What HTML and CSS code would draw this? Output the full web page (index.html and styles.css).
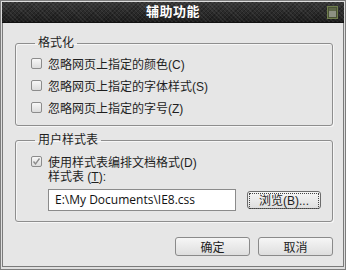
FILE: index.html
```html
<!DOCTYPE html>
<html lang="zh-CN">
<head>
  <meta charset="UTF-8" />
  <title>辅助功能</title>
  <link rel="stylesheet" href="styles.css">
</head>
<body>

<div class="window">
  <div class="titlebar">
    <span class="title">辅助功能</span>
    <svg class="title-icon" width="11" height="13" viewBox="0 0 11 13">
      <rect x="0.5" y="0.5" width="10" height="12" fill="#4a5236" stroke="#6f7d4c"/>
      <rect x="2" y="2" width="7" height="3" fill="#5d6648"/>
      <rect x="2" y="5" width="7" height="6" fill="#8d9182"/>
    </svg>
  </div>

  <div class="content">
    <fieldset class="group">
      <legend>格式化</legend>
      <label class="check-row"><span class="box"></span>忽略网页上指定的颜色(C)</label>
      <label class="check-row"><span class="box"></span>忽略网页上指定的字体样式(S)</label>
      <label class="check-row"><span class="box"></span>忽略网页上指定的字号(Z)</label>
    </fieldset>

    <fieldset class="group user-styles">
      <legend>用户样式表</legend>
      <label class="check-row short"><span class="box checked">
        <svg width="9" height="9" viewBox="0 0 9 9"><path d="M1.5 4.5 L3.5 7 L7.5 1.5" fill="none" stroke="#8a8a8a" stroke-width="1.3"/></svg>
      </span>使用样式表编排文档格式(D)</label>
      <div class="sub">
        <div class="field-label">样式表 (<u>T</u>):</div>
        <div class="field-row">
          <div class="input">E:\My Documents\IE8.css</div>
          <button class="btn browse"><span class="focus">浏览(B)...</span></button>
        </div>
      </div>
    </fieldset>

    <div class="actions">
      <button class="btn">确定</button>
      <button class="btn">取消</button>
    </div>
  </div>
</div>

</body>
</html>
```

FILE: styles.css
```css
body {
  margin: 0;
  background: #ffffff;
  font-family: "Liberation Sans", "Noto Sans CJK SC", sans-serif;
  font-size: 12px;
  color: #1e1e1e;
}

.window {
  width: 346px;
  height: 270px;
  box-sizing: border-box;
  border: 1px solid #7d7d7d;
  padding: 1px 1px 2px 1px;
  background: #dedede;
  display: flex;
  flex-direction: column;
}

.titlebar {
  height: 20px;
  border-bottom: 1px solid #111;
  background-color: #262626;
  background-image:
    repeating-linear-gradient(45deg, rgba(255,255,255,0.06) 0 1px, transparent 1px 3px),
    repeating-linear-gradient(-45deg, rgba(0,0,0,0.25) 0 1px, transparent 1px 3px),
    linear-gradient(#3a3a3a, #1e1e1e);
  display: flex;
  align-items: center;
  justify-content: center;
  position: relative;
}

.title {
  color: #ffffff;
  font-weight: bold;
  font-size: 13px;
  line-height: 16px;
  letter-spacing: 0.5px;
}

.title-icon {
  position: absolute;
  right: 6px;
  top: 4px;
}

.content {
  flex: 1;
  background: #e6e6e6;
  border: 1px solid #7a7a7a;
  border-top: none;
  padding: 13px 10px 0 12px;
}

.group {
  margin: 0;
  padding: 2px 0 7px 15px;
  border: 1px solid #8e8e8e;
  border-radius: 3px;
  box-shadow: inset 1px 1px 0 #f6f6f6, 1px 1px 0 #f6f6f6;
}

.group legend {
  padding: 0 3px;
  margin-left: 4px;
  line-height: 14px;
}

.check-row {
  display: flex;
  align-items: center;
  gap: 6px;
  height: 22px;
}

.check-row.short {
  height: 18px;
  margin-top: 3px;
}

.box {
  width: 9px;
  height: 9px;
  border: 1px solid #8c8c8c;
  border-radius: 2px;
  background: linear-gradient(#f7f7f7, #dcdcdc);
  display: flex;
  align-items: center;
  justify-content: center;
}

.user-styles {
  margin-top: 7px;
  padding-bottom: 10px;
}

.sub {
  padding-left: 17px;
}

.field-label {
  line-height: 14px;
}

.field-label u {
  text-decoration: underline;
}

.field-row {
  display: flex;
  align-items: center;
  gap: 11px;
  margin-top: 5px;
}

.input {
  width: 180px;
  height: 20px;
  border: 1px solid #8b8b8b;
  background: #ffffff;
  padding-left: 6px;
  line-height: 20px;
  font-family: "Open Sans", "Noto Sans CJK SC", sans-serif;
  font-size: 12px;
  color: #111;
}

.btn {
  font-family: inherit;
  font-size: 12px;
  color: #1e1e1e;
  height: 19px;
  width: 75px;
  padding: 0;
  border: 1px solid #8a8a8a;
  border-radius: 3px;
  background: linear-gradient(#f6f6f6, #dedede);
}

.browse {
  width: 74px;
  height: 18px;
  border-color: #6c6c6c;
  padding: 1px;
}

.browse .focus {
  display: block;
  height: 14px;
  line-height: 14px;
  border: 1px dotted #444;
}

.actions {
  display: flex;
  justify-content: flex-end;
  gap: 8px;
  margin-top: 15px;
}
```
